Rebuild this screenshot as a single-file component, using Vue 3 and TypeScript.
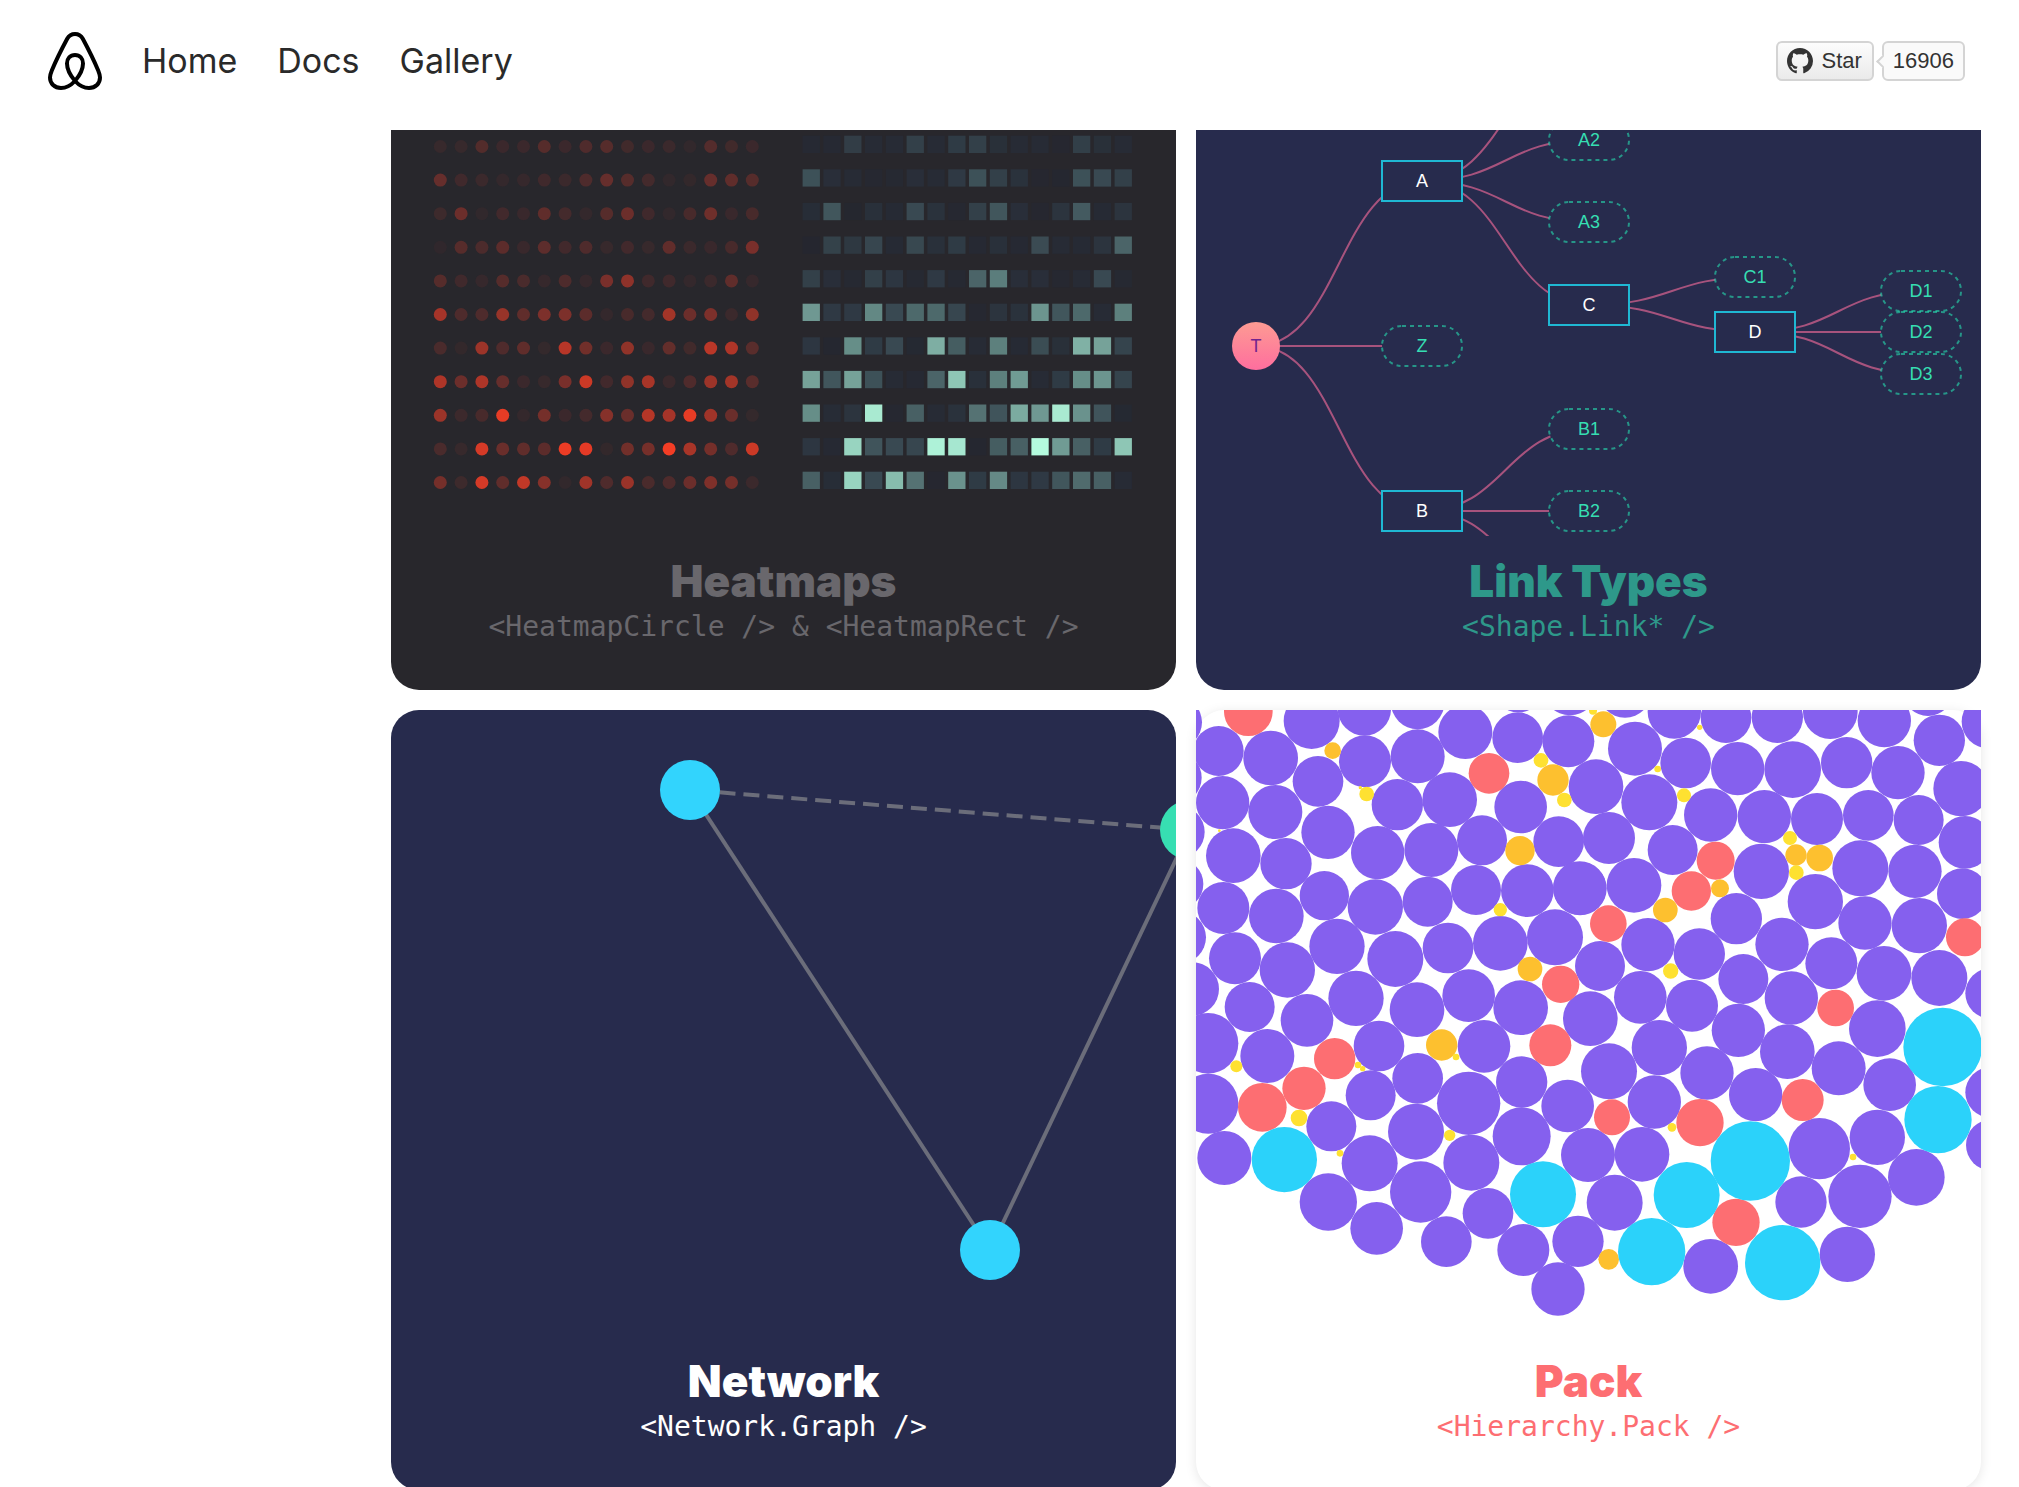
<script setup lang="ts">
type Triple = [number, number, number]

interface Patch {
  x: number
  y: number
  purple: Triple[]
  red: Triple[]
  orange: Triple[]
  yellow: Triple[]
  cyan: Triple[]
}

/* Heatmap bins, in percent of the maximum count */
const bins: number[][] = [
  [8, 8, 30, 12, 12, 32, 12, 28, 32, 17, 12, 11, 3, 31, 17, 12],
  [42, 16, 11, 5, 7, 16, 11, 27, 42, 32, 20, 3, 4, 42, 38, 32],
  [14, 45, 2, 18, 10, 38, 20, 5, 32, 45, 16, 3, 22, 47, 10, 22],
  [1, 33, 25, 36, 10, 37, 18, 28, 8, 18, 8, 39, 11, 10, 22, 52],
  [32, 16, 7, 32, 24, 7, 27, 7, 52, 62, 16, 16, 5, 11, 38, 7],
  [72, 27, 27, 66, 38, 54, 54, 36, 5, 22, 20, 71, 45, 54, 11, 63],
  [24, 4, 68, 28, 38, 6, 79, 48, 12, 63, 10, 40, 17, 80, 75, 34],
  [75, 45, 75, 42, 12, 8, 52, 86, 18, 63, 73, 11, 28, 68, 71, 34],
  [68, 13, 22, 96, 5, 50, 12, 20, 58, 44, 78, 72, 96, 70, 44, 6],
  [24, 8, 90, 44, 38, 36, 98, 95, 4, 48, 50, 100, 73, 50, 28, 86],
  [50, 14, 90, 38, 83, 58, 3, 70, 28, 67, 24, 27, 45, 55, 50, 11],
]

function mix(from: Triple, to: Triple, t: number): string {
  const c = from.map((v, i) => Math.round(v + (to[i] - v) * t))
  return `rgb(${c[0]},${c[1]},${c[2]})`
}

const cells = bins.flatMap((row, r) =>
  row.map((v, c) => {
    const t = v / 100
    return {
      key: `${r}-${c}`,
      c,
      r,
      hot: mix([119, 49, 47], [243, 61, 37], t),
      cool: mix([18, 37, 73], [180, 251, 222], t),
      alpha: 0.1 + 0.9 * t,
    }
  }),
)

/* Tree */
interface TreeNode {
  name: string
  x: number
  y: number
  leaf: boolean
}
const nodes: TreeNode[] = [
  { name: 'A', x: 226, y: 51, leaf: false },
  { name: 'Z', x: 226, y: 216, leaf: true },
  { name: 'B', x: 226, y: 381, leaf: false },
  { name: 'A2', x: 393, y: 10, leaf: true },
  { name: 'A3', x: 393, y: 92, leaf: true },
  { name: 'C', x: 393, y: 175, leaf: false },
  { name: 'B1', x: 393, y: 299, leaf: true },
  { name: 'B2', x: 393, y: 381, leaf: true },
  { name: 'C1', x: 559, y: 147, leaf: true },
  { name: 'D', x: 559, y: 202, leaf: false },
  { name: 'D1', x: 725, y: 161, leaf: true },
  { name: 'D2', x: 725, y: 202, leaf: true },
  { name: 'D3', x: 725, y: 244, leaf: true },
]
const links: [number, number, number, number][] = [
  [60, 216, 226, 51],
  [60, 216, 226, 216],
  [60, 216, 226, 381],
  [226, 51, 393, -74],
  [226, 51, 393, 10],
  [226, 51, 393, 92],
  [226, 51, 393, 175],
  [226, 381, 393, 299],
  [226, 381, 393, 381],
  [226, 381, 393, 464],
  [393, 175, 559, 147],
  [393, 175, 559, 202],
  [559, 202, 725, 161],
  [559, 202, 725, 202],
  [559, 202, 725, 244],
]
function linkPath([x0, y0, x1, y1]: [number, number, number, number]): string {
  const m = (x0 + x1) / 2
  return `M${x0} ${y0}C${m} ${y0} ${m} ${y1} ${x1} ${y1}`
}

/* Packed circles as [x, y, radius], one patch per quarter of the chart */
const patches: Patch[] = [
  {
    x: -18,
    y: -15,
    purple: [
      [-42, 52, 78], [-42, 218, 77], [-34, 381, 78], [-36, 537, 76], [-30, 697, 78], [7, 852, 80],
      [86, 138, 75], [242, 159, 82], [365, 48, 84], [523, 12, 80], [683, -7, 80], [384, 229, 76],
      [525, 169, 78], [683, 154, 81], [98, 293, 80], [256, 321, 81], [622, 299, 77], [779, 284, 82],
      [826, 81, 81], [985, -55, 77], [1140, -50, 81], [983, 98, 76], [1135, 109, 78], [992, 306, 79],
      [1218, 245, 82], [1106, 410, 76], [130, 452, 82], [288, 476, 77], [414, 382, 80], [563, 443, 80],
      [724, 435, 81], [876, 406, 75], [403, 572, 74], [556, 606, 83], [713, 590, 75], [858, 555, 75],
      [1012, 557, 79], [1170, 551, 80], [100, 609, 78], [259, 633, 82], [441, 724, 83], [616, 762, 84],
      [774, 729, 76], [931, 715, 82], [1095, 697, 84], [135, 760, 78], [292, 795, 83], [498, 880, 83],
      [681, 914, 82], [836, 872, 79], [992, 908, 82], [1230, 783, 75], [1201, 941, 82], [179, 906, 75],
      [351, 946, 79],
    ],
    red: [[175, 20, 73], [897, 205, 61], [1112, 838, 56]],
    orange: [[428, 137, 25], [1240, 58, 39], [1089, 225, 47], [990, 437, 44], [1020, 792, 37]],
    yellow: [[530, 267, 22], [511, 248, 5], [1209, 17, 12], [1053, 166, 22], [1123, 285, 22], [88, 377, 4], [931, 614, 20]],
    cyan: [],
  },
  {
    x: 1212,
    y: -15,
    purple: [
      [75, -42, 80], [105, 131, 81], [223, 21, 80], [378, 38, 76], [532, 37, 77], [691, 20, 82],
      [853, 47, 80], [984, -42, 75], [1018, 106, 77], [1165, 50, 80], [257, 174, 76], [413, 191, 80],
      [578, 194, 85], [740, 173, 77], [894, 203, 80], [1083, 251, 83], [148, 292, 84], [332, 330, 80],
      [493, 335, 80], [651, 342, 78], [805, 331, 76], [956, 345, 75], [1095, 412, 79], [218, 435, 75],
      [484, 499, 83], [781, 490, 84], [945, 499, 80], [1087, 566, 76], [27, 399, 78], [-61, 549, 80],
      [102, 541, 82], [646, 590, 83], [409, 641, 77], [144, 719, 80], [298, 747, 77], [546, 718, 80],
      [795, 654, 80], [958, 662, 83], [694, 775, 78], [852, 805, 82], [1018, 819, 84], [1172, 865, 76],
      [430, 822, 75], [574, 879, 80], [121, 877, 79], [276, 902, 78],
    ],
    red: [[347, 467, 57], [274, 558, 59], [25, 656, 55], [1095, 697, 57], [707, 909, 55]],
    orange: [[588, 450, 32], [659, 459, 40], [360, 550, 27], [196, 615, 37]],
    yellow: [[299, 67, 8], [173, 192, 10], [252, 271, 21], [570, 399, 21], [589, 503, 22], [212, 798, 23]],
    cyan: [],
  },
  {
    x: -18,
    y: 945,
    purple: [
      [232, 93, 81], [54, 55, 91], [55, 236, 90], [567, 63, 76], [882, 64, 79], [683, 160, 76],
      [542, 211, 75], [424, 304, 75], [103, 399, 81], [539, 415, 84], [678, 320, 84], [836, 235, 95],
      [995, 171, 77], [1133, 243, 79], [995, 334, 87], [844, 413, 84], [415, 531, 86], [560, 610, 79],
      [692, 501, 92], [769, 650, 76], [894, 565, 76], [1000, 675, 78], [1164, 649, 77], [1104, 792, 80],
      [1194, 390, 81],
    ],
    red: [[217, 247, 73], [342, 190, 65], [434, 101, 62], [1081, 61, 63]],
    orange: [[755, 60, 47]],
    yellow: [[139, 124, 18], [504, 120, 10], [518, 131, 8], [798, 96, 10], [327, 279, 25], [450, 385, 10], [779, 331, 17]],
    cyan: [[283, 404, 98], [1059, 508, 99]],
  },
  {
    x: 1212,
    y: 945,
    purple: [
      [178, 68, 83], [321, 144, 80], [415, 16, 80], [562, 80, 82], [716, 130, 81], [832, 11, 85],
      [869, 179, 79], [1172, 202, 76], [1175, 360, 77], [467, 209, 80], [163, 231, 80], [126, 388, 82],
      [658, 371, 92], [832, 337, 83], [949, 457, 85], [780, 514, 95], [603, 531, 77], [332, 724, 82],
      [742, 688, 83], [44, 533, 84], [27, 139, 84],
    ],
    red: [[608, 225, 63], [300, 293, 71], [36, 277, 54], [408, 592, 71]],
    orange: [[26, 703, 31]],
    yellow: [[216, 307, 13], [759, 396, 10]],
    cyan: [[1028, 66, 118], [1014, 284, 101], [451, 408, 119], [260, 510, 99], [155, 680, 101], [548, 713, 113]],
  },
]
const hues = ['purple', 'red', 'orange', 'yellow', 'cyan'] as const
</script>

<template>
  <div class="page">
    <header class="topbar">
      <nav class="nav">
        <a class="logo" href="#" aria-label="Airbnb">
          <svg width="54" height="58" viewBox="0 0 54 58" fill="none" stroke="#000" stroke-width="4" stroke-linejoin="round">
            <path
              d="M27 49C21.500 42.500 19 37 19 31.500C19 26.500 22.200 23 27 23S35 26.500 35 31.500C35 37 32.500 42.500 27 49C22.500 53.800 17.500 56 13 56C6.500 56 2 51.500 2 45.500C2 43 2.600 41.500 3.800 38.500C8 28.500 14 16.500 19.200 6.800C21 3.500 23.300 2 27 2S33 3.500 34.800 6.800C40 16.500 46 28.500 50.200 38.500C51.400 41.500 52 43 52 45.500C52 51.500 47.500 56 41 56C36.500 56 31.500 53.800 27 49Z"
            />
          </svg>
        </a>
        <a class="nav-link" href="#home">Home</a>
        <a class="nav-link" href="#docs">Docs</a>
        <a class="nav-link" href="#gallery">Gallery</a>
      </nav>
      <div class="github">
        <a class="star" href="#star">
          <svg width="26" height="26" viewBox="0 0 16 16" fill="#333" aria-hidden="true">
            <path
              d="M8 0C3.58 0 0 3.58 0 8c0 3.54 2.29 6.53 5.47 7.59.4.07.55-.17.55-.38 0-.19-.01-.82-.01-1.49-2.01.37-2.53-.49-2.69-.94-.09-.23-.48-.94-.82-1.13-.28-.15-.68-.52-.01-.53.63-.01 1.08.58 1.23.82.72 1.21 1.87.87 2.33.66.07-.52.28-.87.51-1.07-1.78-.2-3.64-.89-3.64-3.95 0-.87.31-1.59.82-2.15-.08-.2-.36-1.02.08-2.12 0 0 .67-.21 2.2.82.64-.18 1.32-.27 2-.27s1.36.09 2 .27c1.53-1.04 2.2-.82 2.2-.82.44 1.1.16 1.92.08 2.12.51.56.82 1.27.82 2.15 0 3.07-1.87 3.75-3.65 3.95.29.25.54.73.54 1.48 0 1.07-.01 1.93-.01 2.2 0 .21.15.46.55.38A8.01 8.01 0 0 0 16 8c0-4.42-3.58-8-8-8z"
            />
          </svg>
          <span>Star</span>
        </a>
        <a class="count" href="#stargazers">16906</a>
      </div>
    </header>

    <main class="gallery">
      <a class="tile tile-cut heatmaps" href="#heatmaps">
        <svg class="chart" viewBox="0 0 785 406" aria-hidden="true">
          <circle
            v-for="cell in cells"
            :key="'c' + cell.key"
            :cx="49.3 + cell.c * 20.8"
            :cy="16.5 + cell.r * 33.6"
            r="6.5"
            :fill="cell.hot"
            :fill-opacity="cell.alpha"
          />
          <rect
            v-for="cell in cells"
            :key="'r' + cell.key"
            :x="411.6 + cell.c * 20.8"
            :y="5.7 + cell.r * 33.6"
            width="17.3"
            height="17.3"
            :fill="cell.cool"
            :fill-opacity="cell.alpha"
          />
        </svg>
        <div class="details">
          <h2 class="title">Heatmaps</h2>
          <code class="tag">&lt;HeatmapCircle /&gt; &amp; &lt;HeatmapRect /&gt;</code>
        </div>
      </a>

      <a class="tile tile-cut link-types" href="#trees">
        <svg class="chart" viewBox="0 0 785 406" aria-hidden="true">
          <defs>
            <linearGradient id="root-fill" x1="0" x2="0" y1="0" y2="1">
              <stop offset="0" stop-color="#fd9b93" />
              <stop offset="1" stop-color="#fe6e9e" />
            </linearGradient>
          </defs>
          <path v-for="(l, i) in links" :key="i" class="link" :d="linkPath(l)" />
          <circle cx="60" cy="216" r="24" fill="url(#root-fill)" />
          <text class="node-text root" x="60" y="222">T</text>
          <g v-for="n in nodes" :key="n.name">
            <rect
              :class="n.leaf ? 'leaf' : 'branch'"
              :x="n.x - 40"
              :y="n.y - 20"
              width="80"
              height="40"
              :rx="n.leaf ? 20 : 0"
            />
            <text class="node-text" :class="{ 'leaf-text': n.leaf }" :x="n.x" :y="n.y + 6">{{ n.name }}</text>
          </g>
        </svg>
        <div class="details">
          <h2 class="title">Link Types</h2>
          <code class="tag">&lt;Shape.Link* /&gt;</code>
        </div>
      </a>

      <a class="tile network" href="#network">
        <svg class="chart" viewBox="0 0 785 626" aria-hidden="true">
          <g stroke="#999" stroke-width="4" stroke-opacity="0.6">
            <line x1="299" y1="80" x2="599" y2="540" />
            <line x1="599" y1="540" x2="799" y2="120" />
            <line x1="799" y1="120" x2="299" y2="80" stroke-dasharray="16 8" />
          </g>
          <circle cx="299" cy="80" r="30" fill="#32d4fd" />
          <circle cx="599" cy="540" r="30" fill="#32d4fd" />
          <circle cx="799" cy="120" r="30" fill="#37deb2" />
        </svg>
        <div class="details">
          <h2 class="title">Network</h2>
          <code class="tag">&lt;Network.Graph /&gt;</code>
        </div>
      </a>

      <a class="tile pack" href="#pack">
        <svg class="chart" viewBox="0 0 2355 1878" aria-hidden="true">
          <g v-for="(p, i) in patches" :key="i" :transform="`translate(${p.x} ${p.y})`">
            <g v-for="hue in hues" :key="hue" :class="hue">
              <circle v-for="(c, j) in p[hue]" :key="j" :cx="c[0]" :cy="c[1]" :r="c[2]" />
            </g>
          </g>
        </svg>
        <div class="details">
          <h2 class="title">Pack</h2>
          <code class="tag">&lt;Hierarchy.Pack /&gt;</code>
        </div>
      </a>
    </main>
  </div>
</template>

<style>
body {
  margin: 0;
  background: #fff;
}
</style>

<style scoped>
.page {
  height: 100vh;
  overflow: hidden;
  font-family: Inter, 'Liberation Sans', sans-serif;
}
.topbar {
  display: flex;
  align-items: center;
  justify-content: space-between;
  box-sizing: border-box;
  height: 130px;
  padding: 0 54px 8px 48px;
}
.nav {
  display: flex;
  align-items: center;
  gap: 40px;
}
.logo {
  display: flex;
}
.nav-link {
  color: #2a2a2a;
  font-size: 34px;
  line-height: 44px;
  text-decoration: none;
}
.github {
  display: flex;
  gap: 8px;
  font-family: 'Liberation Sans', Arial, sans-serif;
  font-size: 22px;
  line-height: 36px;
}
.star,
.count {
  display: flex;
  align-items: center;
  box-sizing: border-box;
  height: 40px;
  border: 2px solid #d4d4d4;
  border-radius: 6px;
  color: #333;
  text-decoration: none;
}
.star {
  gap: 8px;
  padding: 0 10px 0 9px;
  background: linear-gradient(#fcfcfc, #eaeaea);
}
.count {
  position: relative;
  padding: 0 9px;
  background: #fafafa;
}
.count::before {
  position: absolute;
  top: 14px;
  left: -6px;
  width: 7px;
  height: 7px;
  border: solid #d4d4d4;
  border-width: 0 0 2px 2px;
  background: #fafafa;
  content: '';
  transform: rotate(45deg);
}
.gallery {
  display: grid;
  grid-template-columns: 1fr 1fr;
  gap: 20px;
  padding: 0 38px 0 391px;
}
.tile {
  display: flex;
  flex-direction: column;
  border-radius: 28px;
  text-align: center;
  text-decoration: none;
}
.tile-cut {
  border-radius: 0 0 28px 28px;
}
.chart {
  display: block;
  width: 100%;
}
.details {
  padding: 23px 0 47px;
}
.title {
  margin: 0 0 8px;
  font-size: 44px;
  font-weight: 900;
  line-height: 44px;
}
.tag {
  display: block;
  font-family: 'DejaVu Sans Mono', monospace;
  font-size: 28px;
  line-height: 32px;
}
.heatmaps {
  background: #28272c;
  color: #69676c;
}
.link-types {
  background: #272b4d;
  color: #2e988a;
}
.network {
  background: #272b4d;
  color: #fff;
}
.pack {
  background: #fff;
  box-shadow: 0 2px 12px rgba(0, 0, 0, 0.1);
  color: #fd6e72;
}
.link {
  fill: none;
  stroke: #fe6e9e;
  stroke-opacity: 0.6;
  stroke-width: 2;
}
.branch {
  fill: #272b4d;
  stroke: #1fb8d3;
  stroke-width: 2;
}
.leaf {
  fill: #272b4d;
  stroke: #26deb0;
  stroke-dasharray: 4 4;
  stroke-opacity: 0.6;
  stroke-width: 2;
}
.node-text {
  fill: #fff;
  font-family: 'Liberation Sans', Arial, sans-serif;
  font-size: 18px;
  text-anchor: middle;
}
.root {
  fill: #71248e;
}
.leaf-text {
  fill: #36deb2;
}
.purple {
  fill: #8560ee;
}
.red {
  fill: #fd6e72;
}
.orange {
  fill: #fdc02f;
}
.yellow {
  fill: #fee131;
}
.cyan {
  fill: #2bd2fa;
}
</style>
